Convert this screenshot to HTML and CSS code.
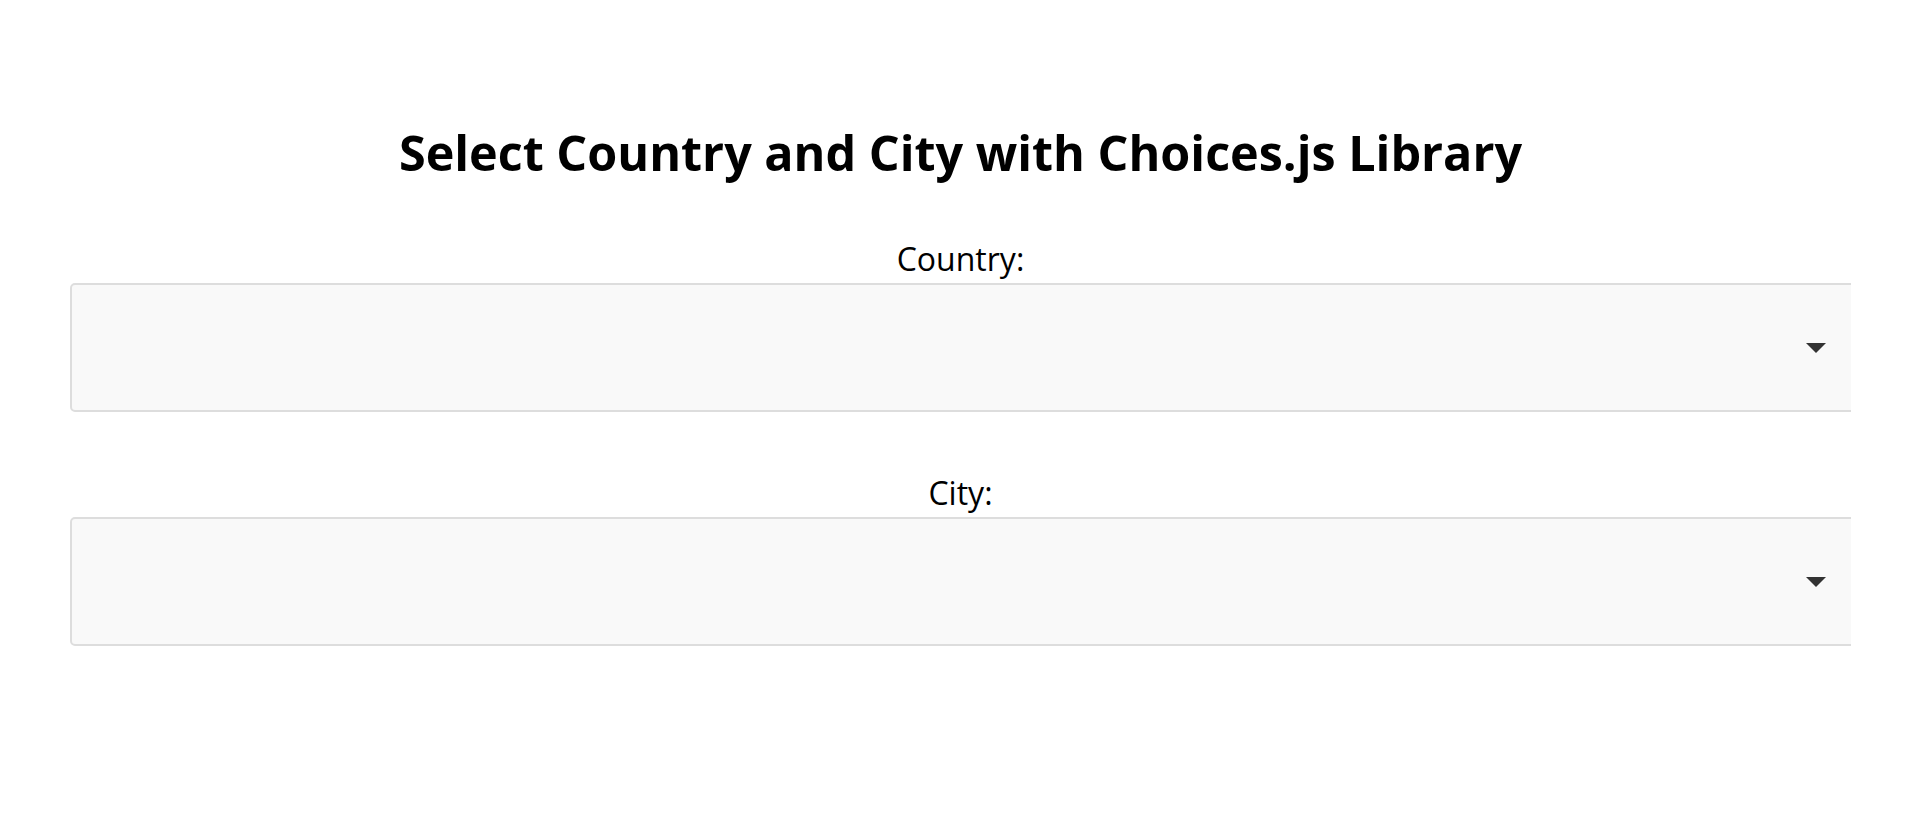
FILE: index.html
```html
<!DOCTYPE html>
<html lang="en">
<head>
<meta charset="utf-8">
<title>Select Country and City with Choices.js Library</title>
<link rel="stylesheet" href="styles.css">
</head>
<body>
<main class="page">
  <h1 class="title">Select Country and City with Choices.js Library</h1>
  <div class="field">
    <label class="label">Country:</label>
    <div class="clip">
      <div class="choices"><span class="arrow"></span></div>
    </div>
  </div>
  <div class="field">
    <label class="label">City:</label>
    <div class="clip">
      <div class="choices"><span class="arrow"></span></div>
    </div>
  </div>
</main>
</body>
</html>
```
FILE: styles.css
```css
html, body {
  margin: 0;
  padding: 0;
  background: #ffffff;
}
body {
  font-family: "Open Sans", "Noto Sans", sans-serif;
  color: #000;
}
.page {
  padding: 122px 69px 0 70px;
}
.title {
  margin: 0 0 59px;
  font-size: 48.5px;
  line-height: 60px;
  font-weight: 700;
  text-align: center;
}
.field {
  display: flex;
  flex-direction: column;
  margin-bottom: 63px;
}
.label {
  display: block;
  text-align: center;
  font-size: 32px;
  line-height: 36px;
  margin-bottom: 6px;
}
.clip {
  overflow: hidden;
}
.choices {
  box-sizing: border-box;
  height: 129px;
  margin-right: -10px;
  background: #f9f9f9;
  border: 2px solid #dddddd;
  border-radius: 5px;
  display: flex;
  align-items: center;
  justify-content: flex-end;
  padding-right: 33px;
}
.arrow {
  width: 0;
  height: 0;
  border-left: 10px solid transparent;
  border-right: 10px solid transparent;
  border-top: 10px solid #333333;
}
```
